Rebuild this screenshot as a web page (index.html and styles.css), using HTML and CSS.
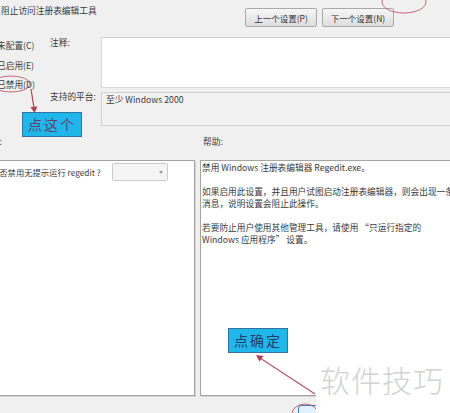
FILE: index.html
```html
<!DOCTYPE html>
<html lang="zh-CN">
<head>
<meta charset="utf-8">
<title>阻止访问注册表编辑工具</title>
<link rel="stylesheet" href="styles.css">
</head>
<body>
<div class="window">
  <header class="toolbar">
    <div class="title">阻止访问注册表编辑工具</div>
    <div class="nav">
      <button class="btn">上一个设置(P)</button>
      <button class="btn">下一个设置(N)</button>
    </div>
  </header>

  <section class="config">
    <div class="states">
      <div class="state">未配置(C)</div>
      <div class="state">已启用(E)</div>
      <div class="state">已禁用(D)</div>
    </div>
    <div class="fields">
      <div class="field-label label-comment">注释:</div>
      <div class="comment"></div>
      <div class="field-label label-platform">支持的平台:</div>
      <div class="platform">至少 Windows 2000</div>
    </div>
  </section>

  <div class="captions">
    <div class="cap-options">选项:</div>
    <div class="cap-help">帮助:</div>
  </div>

  <div class="panes">
    <div class="pane options">
      <div class="question">
        <span class="q-label">是否禁用无提示运行 regedit ?</span>
        <span class="select"><span class="caret"></span></span>
      </div>
    </div>
    <div class="pane help">
      <p>禁用 Windows 注册表编辑器 Regedit.exe。</p>
      <p>如果启用此设置，并且用户试图启动注册表编辑器，则会出现一条<br>消息，说明设置会阻止此操作。</p>
      <p>若要防止用户使用其他管理工具，请使用 “只运行指定的<br>Windows 应用程序” 设置。</p>
    </div>
  </div>

  <footer class="actions">
    <button class="ok">确定</button>
  </footer>
</div>

<div class="note note-click">点这个</div>
<div class="note note-ok">点确定</div>

<svg class="marks" width="450" height="413" viewBox="0 0 450 413" xmlns="http://www.w3.org/2000/svg">
  <ellipse cx="404" cy="2" rx="22" ry="11" fill="none" stroke="#c05068" stroke-width="1" opacity="0.85"/>
  <ellipse cx="11" cy="84" rx="19" ry="8" fill="none" stroke="#c05068" stroke-width="1" opacity="0.85"/>
  <line x1="31" y1="89" x2="34" y2="108" stroke="#b4404f" stroke-width="1.2"/>
  <polygon points="30.5,107 37.5,106.5 34.5,113" fill="#b4404f"/>
  <line x1="315" y1="394" x2="260" y2="358" stroke="#b4505c" stroke-width="1.1"/>
  <polygon points="256,355 263.5,356 259.5,361.5" fill="#b4404f"/>
  <ellipse cx="305" cy="414" rx="13" ry="10" fill="none" stroke="#c05068" stroke-width="1" opacity="0.85"/>
</svg>

<div class="watermark">软件技巧</div>
</body>
</html>
```

FILE: styles.css
```css
* { box-sizing: border-box; }

html, body {
  margin: 0;
  padding: 0;
}

body {
  width: 450px;
  height: 413px;
  overflow: hidden;
  position: relative;
  background: #f0f0f0;
  color: #3a3a3a;
  font-family: "Noto Sans CJK SC", "Noto Sans", sans-serif;
  font-size: 8.7px;
  line-height: 12px;
}

.window {
  width: 450px;
  height: 413px;
  display: flex;
  flex-direction: column;
}

/* top bar: policy name and navigation buttons */
.toolbar {
  height: 37px;
  display: flex;
  justify-content: space-between;
  align-items: flex-start;
  padding-right: 56px;
  flex: none;
}

.title {
  margin-top: 5px;
  padding-left: 1px;
  white-space: nowrap;
}

.nav {
  display: flex;
  gap: 5px;
  margin-top: 8px;
}

.btn {
  width: 72px;
  height: 19px;
  padding: 0;
  font: inherit;
  font-size: 8.5px;
  color: #333;
  background: linear-gradient(#f6f6f6, #dedede);
  border: 1px solid #a9a9a9;
  border-radius: 2px;
}

/* state radios + comment / platform fields */
.config {
  display: flex;
  flex: none;
}

.states {
  width: 53px;
  margin-left: -3px;
  margin-top: -1px;
}

.state {
  line-height: 19.5px;
  white-space: nowrap;
}

.fields {
  flex: 1;
  display: grid;
  grid-template-columns: 51px 1fr;
  grid-template-rows: 51px 34px;
  row-gap: 4px;
}

.field-label {
  white-space: nowrap;
}

.label-comment { margin-top: 0; }
.label-platform { margin-top: -1px; }

.comment {
  background: #fff;
  border-top: 1px solid #cfcfcf;
  border-bottom: 1px solid #d8d8d8;
  border-left: 1px solid #d8d8d8;
}

.platform {
  background: #f2f2f2;
  border: 1px solid #d2d2d2;
  border-right: none;
  padding: 1px 0 0 4px;
  white-space: nowrap;
}

/* section captions */
.captions {
  height: 34px;
  padding-top: 10px;
  display: flex;
  flex: none;
}

.cap-options {
  width: 221px;
  margin-left: -18px;
  white-space: nowrap;
}

.cap-help {
  white-space: nowrap;
}

/* option and help panes */
.panes {
  height: 236px;
  display: flex;
  gap: 5px;
  flex: none;
}

.pane {
  background: #fff;
  border: 1px solid #a4a4a4;
  box-shadow: 1px 1px 0 #d4d4d4;
}

.options {
  width: 205px;
  margin-left: -10px;
  flex: none;
}

.question {
  display: flex;
  align-items: center;
  padding-top: 2px;
  white-space: nowrap;
}

.q-label {
  width: 121px;
  font-size: 8.3px;
  flex: none;
}

.select {
  position: relative;
  width: 56px;
  height: 18px;
  background: #f5f5f5;
  border: 1px solid #cbcbcb;
  border-radius: 2px;
}

.caret {
  position: absolute;
  right: 4px;
  top: 7px;
  border-left: 2.5px solid transparent;
  border-right: 2.5px solid transparent;
  border-top: 3px solid #9a9a9a;
}

.help {
  flex: 1;
  margin-right: -3px;
  padding: 1px 0 0 1px;
  white-space: nowrap;
  overflow: hidden;
}

.help p {
  margin: 0 0 12px;
}

/* dialog buttons */
.actions {
  flex: 1;
  display: flex;
  align-items: flex-start;
}

.ok {
  margin: 9px 0 0 298px;
  width: 60px;
  height: 22px;
  padding: 0;
  font: inherit;
  background: #e2f0fb;
  border: 1px solid #3c7fb1;
  border-radius: 3px;
}

/* callout labels */
.note {
  position: absolute;
  width: 60px;
  height: 25px;
  background: #1fb6ea;
  border: 1px solid #35719f;
  font-size: 14px;
  line-height: 23px;
  letter-spacing: 2px;
  text-align: center;
}

.note-click {
  left: 22px;
  top: 112px;
  color: #6b3c6c;
}

.note-ok {
  left: 228px;
  top: 328px;
  color: #263c6a;
}

.marks {
  position: absolute;
  left: 0;
  top: 0;
  pointer-events: none;
}

.watermark {
  position: absolute;
  left: 316px;
  top: 360px;
  width: 134px;
  height: 53px;
  background: #fff;
  padding-left: 4px;
  font-size: 30px;
  font-weight: 300;
  line-height: 38px;
  letter-spacing: 1px;
  color: #d2d2d2;
  white-space: nowrap;
}
```
